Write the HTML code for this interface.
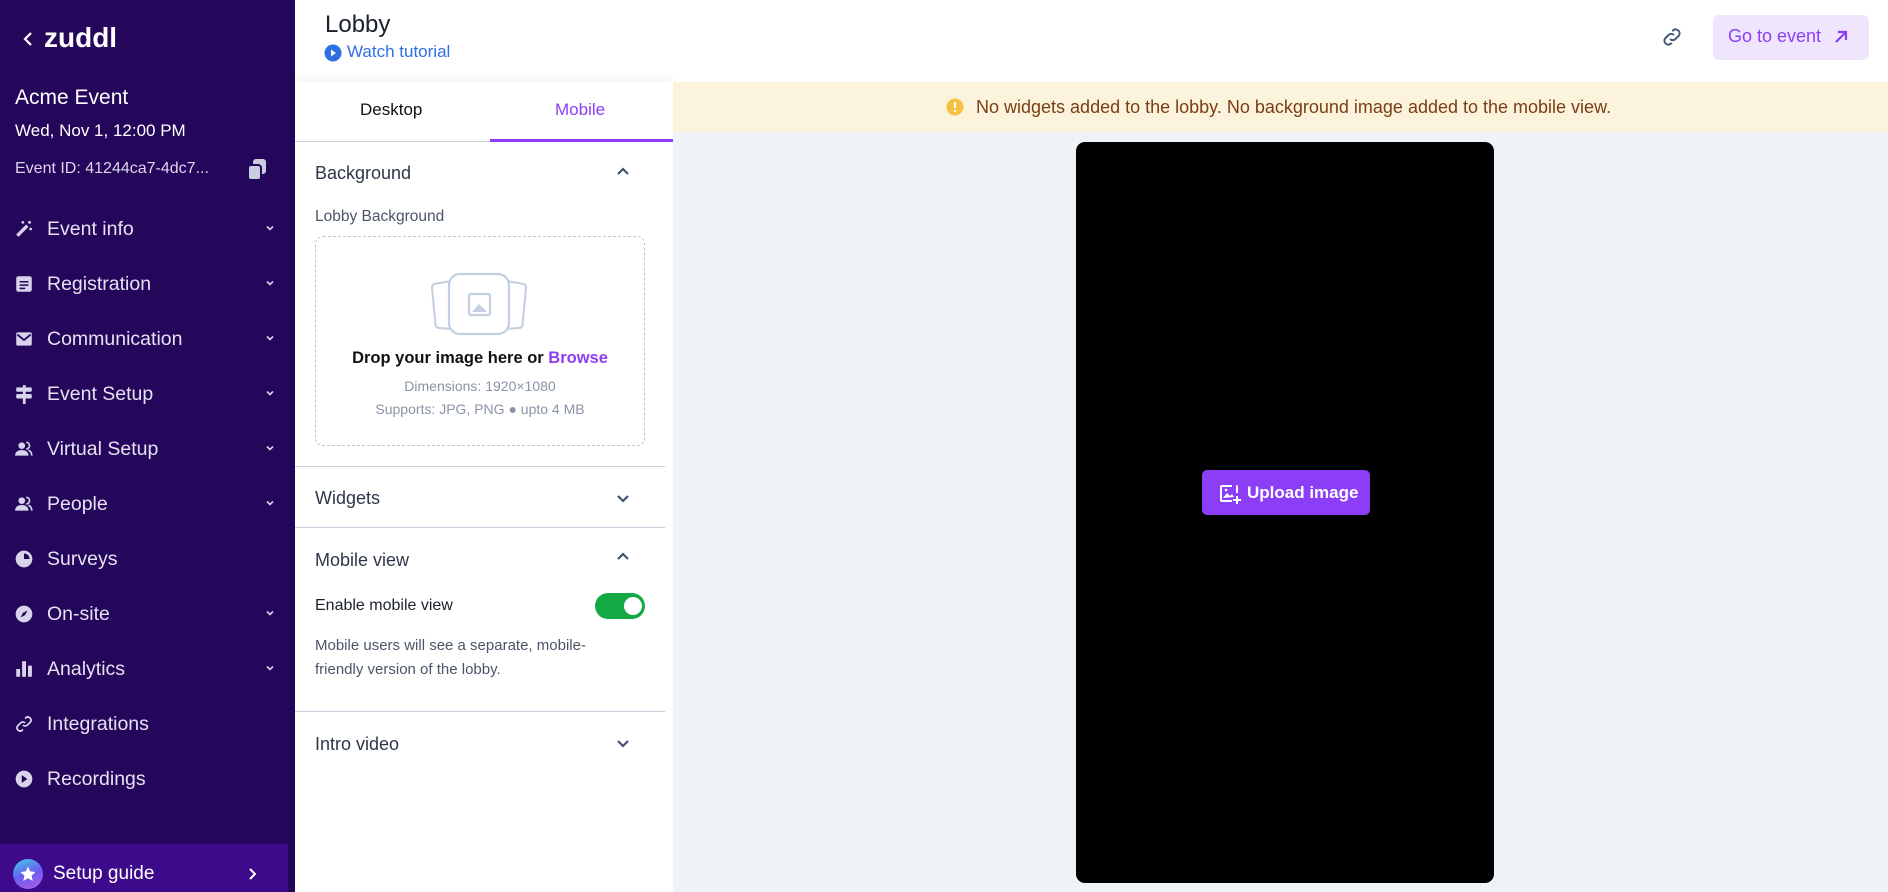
<!DOCTYPE html>
<html><head><meta charset="utf-8"><style>
*{box-sizing:border-box;margin:0;padding:0}
body{width:1888px;height:892px;overflow:hidden;font-family:"Liberation Sans",sans-serif;background:#fff;position:relative}
.abs{position:absolute}
#sb{left:0;top:0;width:295px;height:892px;background:#24065a;color:#fff}
.nav{position:absolute;left:0;width:295px;height:30px;color:#e6e2f3;font-size:19.5px}
.nav .ic{position:absolute;left:14px;top:5px;width:20px;height:20px}
.nav .tx{position:absolute;left:47px;top:4px}
.nav .cv{position:absolute;left:264px;top:8px;width:12px;height:12px}
.sec{position:absolute;left:315px;font-size:18px;color:#2d3748}
.chev{position:absolute;left:614px;width:18px;height:18px}
.hr{position:absolute;left:295px;width:378px;height:1px;background:#c5d0de}
</style></head><body>
<div id="sb" class="abs">
  <svg class="abs" style="left:22px;top:31px" width="14" height="16" viewBox="0 0 14 16"><path d="M9 2 L3 8 L9 14" stroke="#fff" stroke-width="2.2" fill="none"/></svg>
  <div class="abs" style="left:44px;top:22px;font-size:28px;font-weight:bold">zuddl</div>
  <div class="abs" style="left:15px;top:86px;font-size:21px">Acme Event</div>
  <div class="abs" style="left:15px;top:121px;font-size:17px">Wed, Nov 1, 12:00 PM</div>
  <div class="abs" style="left:15px;top:160px;font-size:16px;color:#ddd8ee">Event ID: 41244ca7-4dc7...</div>
  <svg class="abs" style="left:246px;top:158px" width="22" height="24" viewBox="0 0 22 24"><rect x="7" y="1" width="13" height="15" rx="3" fill="#c8cde0"/><rect x="2" y="7" width="13" height="15" rx="3" fill="#c8cde0" stroke="#24065a" stroke-width="2"/></svg>

  <div class="nav" style="top:214px"><svg class="ic" viewBox="0 0 18 18"><path d="M3 15 L12 6" stroke="#d8d4ec" stroke-width="3"/><circle cx="14" cy="3" r="1.3" fill="#d8d4ec"/><circle cx="15" cy="9" r="1.2" fill="#d8d4ec"/><circle cx="8" cy="3" r="1.2" fill="#d8d4ec"/></svg><span class="tx">Event info</span><svg class="cv" viewBox="0 0 12 12"><path d="M3 4.5 L6 7.5 L9 4.5" stroke="#d8d4ec" stroke-width="1.6" fill="none"/></svg></div>
  <div class="nav" style="top:269px"><svg class="ic" viewBox="0 0 18 18"><rect x="2" y="2" width="14" height="14" rx="2" fill="#d8d4ec"/><path d="M5 7h8M5 10h8M5 13h5" stroke="#24065a" stroke-width="1.4"/></svg><span class="tx">Registration</span><svg class="cv" viewBox="0 0 12 12"><path d="M3 4.5 L6 7.5 L9 4.5" stroke="#d8d4ec" stroke-width="1.6" fill="none"/></svg></div>
  <div class="nav" style="top:324px"><svg class="ic" viewBox="0 0 18 18"><rect x="2" y="3" width="14" height="12" rx="1.5" fill="#d8d4ec"/><path d="M3 5 L9 10 L15 5" stroke="#24065a" stroke-width="1.6" fill="none"/></svg><span class="tx">Communication</span><svg class="cv" viewBox="0 0 12 12"><path d="M3 4.5 L6 7.5 L9 4.5" stroke="#d8d4ec" stroke-width="1.6" fill="none"/></svg></div>
  <div class="nav" style="top:379px"><svg class="ic" viewBox="0 0 18 18"><rect x="2" y="3" width="14" height="4" rx="1" fill="#d8d4ec"/><rect x="2" y="9" width="14" height="4" rx="1" fill="#d8d4ec"/><rect x="8" y="1" width="2.5" height="17" fill="#d8d4ec"/></svg><span class="tx">Event Setup</span><svg class="cv" viewBox="0 0 12 12"><path d="M3 4.5 L6 7.5 L9 4.5" stroke="#d8d4ec" stroke-width="1.6" fill="none"/></svg></div>
  <div class="nav" style="top:434px"><svg class="ic" viewBox="0 0 18 18"><circle cx="7" cy="6" r="3" fill="#d8d4ec"/><path d="M1 15c0-4 3-5 6-5s6 1 6 5z" fill="#d8d4ec"/><path d="M11 3a3 3 0 010 6M13 10c2 1 3 3 3 5" stroke="#d8d4ec" stroke-width="1.5" fill="none"/></svg><span class="tx">Virtual Setup</span><svg class="cv" viewBox="0 0 12 12"><path d="M3 4.5 L6 7.5 L9 4.5" stroke="#d8d4ec" stroke-width="1.6" fill="none"/></svg></div>
  <div class="nav" style="top:489px"><svg class="ic" viewBox="0 0 18 18"><circle cx="7" cy="6" r="3" fill="#d8d4ec"/><path d="M1 15c0-4 3-5 6-5s6 1 6 5z" fill="#d8d4ec"/><path d="M11 3a3 3 0 010 6M13 10c2 1 3 3 3 5" stroke="#d8d4ec" stroke-width="1.5" fill="none"/></svg><span class="tx">People</span><svg class="cv" viewBox="0 0 12 12"><path d="M3 4.5 L6 7.5 L9 4.5" stroke="#d8d4ec" stroke-width="1.6" fill="none"/></svg></div>
  <div class="nav" style="top:544px"><svg class="ic" viewBox="0 0 18 18"><circle cx="9" cy="9" r="7.5" fill="#d8d4ec"/><path d="M9 9V4a5 5 0 015 5z" fill="#24065a"/></svg><span class="tx">Surveys</span></div>
  <div class="nav" style="top:599px"><svg class="ic" viewBox="0 0 18 18"><circle cx="9" cy="9" r="7.5" fill="#d8d4ec"/><path d="M12 6 L10 10 L6 12 L8 8z" fill="#24065a"/></svg><span class="tx">On-site</span><svg class="cv" viewBox="0 0 12 12"><path d="M3 4.5 L6 7.5 L9 4.5" stroke="#d8d4ec" stroke-width="1.6" fill="none"/></svg></div>
  <div class="nav" style="top:654px"><svg class="ic" viewBox="0 0 18 18"><rect x="2" y="9" width="3.5" height="7" fill="#d8d4ec"/><rect x="7.3" y="2" width="3.5" height="14" fill="#d8d4ec"/><rect x="12.6" y="6" width="3.5" height="10" fill="#d8d4ec"/></svg><span class="tx">Analytics</span><svg class="cv" viewBox="0 0 12 12"><path d="M3 4.5 L6 7.5 L9 4.5" stroke="#d8d4ec" stroke-width="1.6" fill="none"/></svg></div>
  <div class="nav" style="top:709px"><svg class="ic" viewBox="0 0 18 18"><path d="M8 10a3 3 0 004 0l3-3a3 3 0 00-4-4l-1 1M10 8a3 3 0 00-4 0l-3 3a3 3 0 004 4l1-1" stroke="#d8d4ec" stroke-width="1.6" fill="none"/></svg><span class="tx">Integrations</span></div>
  <div class="nav" style="top:764px"><svg class="ic" viewBox="0 0 18 18"><circle cx="9" cy="9" r="7.5" fill="#d8d4ec"/><path d="M7 5.5 L12 9 L7 12.5z" fill="#24065a"/></svg><span class="tx">Recordings</span></div>

  <div class="abs" style="left:0;top:844px;width:288px;height:48px;background:#3d0a8c">
    <div class="abs" style="left:13px;top:15px;width:30px;height:30px;border-radius:50%;background:linear-gradient(160deg,#3fd0e0,#6a5cf5 50%,#b45ce0)"></div>
    <svg class="abs" style="left:19px;top:21px" width="18" height="18" viewBox="0 0 24 24"><path d="M12 2l3 6.5 7 .8-5.2 4.8 1.5 7L12 17.6 5.7 21.1l1.5-7L2 9.3l7-.8z" fill="#fff"/></svg>
    <div class="abs" style="left:53px;top:19px;font-size:19px;color:#fff">Setup guide</div>
    <svg class="abs" style="left:246px;top:23px" width="12" height="14" viewBox="0 0 12 14"><path d="M4 2 L9 7 L4 12" stroke="#fff" stroke-width="2" fill="none"/></svg>
  </div>
</div>

<div class="abs" style="left:325px;top:11px;font-size:24px;color:#1a202c">Lobby</div>
<svg class="abs" style="left:324px;top:44px" width="18" height="18" viewBox="0 0 18 18"><circle cx="9" cy="9" r="8.5" fill="#2f6fe4"/><path d="M7 5.5 L12 9 L7 12.5z" fill="#fff"/></svg>
<div class="abs" style="left:347px;top:42px;font-size:17px;color:#2f6fe4">Watch tutorial</div>
<svg class="abs" style="left:1660px;top:25px" width="24" height="24" viewBox="0 0 24 24"><path d="M10 14a4 4 0 005.5 0l3.5-3.5a4 4 0 00-5.5-5.5l-1.2 1.2M14 10a4 4 0 00-5.5 0L5 13.5a4 4 0 005.5 5.5l1.2-1.2" stroke="#4a5a78" stroke-width="2" fill="none"/></svg>
<div class="abs" style="left:1713px;top:15px;width:156px;height:45px;background:#efe5fd;border-radius:6px"></div>
<div class="abs" style="left:1728px;top:26px;font-size:18px;color:#8b3ef5">Go to event</div>
<svg class="abs" style="left:1832px;top:28px" width="18" height="18" viewBox="0 0 18 18"><path d="M4 14 L14 4 M6 4 H14 V12" stroke="#8b3ef5" stroke-width="2.2" fill="none"/></svg>

<div class="abs" style="left:295px;top:82px;width:378px;height:810px;background:#fff;box-shadow:0 -4px 8px rgba(0,0,0,0.05)"></div>
<div class="abs" style="left:360px;top:100px;font-size:17px;color:#111">Desktop</div>
<div class="abs" style="left:555px;top:100px;font-size:17px;color:#8b3ef5">Mobile</div>
<div class="hr" style="top:141px;height:1px"></div>
<div class="abs" style="left:490px;top:139px;width:183px;height:3px;background:#8b3ef5"></div>

<div class="sec" style="top:163px">Background</div>
<svg class="chev" style="top:163px" viewBox="0 0 18 18"><path d="M4 11 L9 6 L14 11" stroke="#3f5470" stroke-width="2.2" fill="none"/></svg>
<div class="abs" style="left:315px;top:208px;font-size:15.5px;color:#4a5568">Lobby Background</div>
<div class="abs" style="left:315px;top:236px;width:330px;height:210px;border:1px dashed #b8c6da;border-radius:8px"></div>
<svg class="abs" style="left:429px;top:272px" width="100" height="66" viewBox="0 0 100 66">
  <path d="M5 12 L22 9 L24 57 L10 56 Q7 56 6.5 53 L3 16 Q3 13 5 12z" fill="#fff" stroke="#c2cfe0" stroke-width="2"/>
  <path d="M95 12 L78 9 L76 57 L90 56 Q93 56 93.5 53 L97 16 Q97 13 95 12z" fill="#fff" stroke="#c2cfe0" stroke-width="2"/>
  <rect x="20" y="2" width="60" height="60" rx="11" fill="#fff" stroke="#c2cfe0" stroke-width="2.2"/>
  <rect x="40" y="22" width="21" height="21" rx="2" fill="none" stroke="#c2cfe0" stroke-width="2.2"/>
  <path d="M43 40 L50 32 L58 40z" fill="#c2cfe0"/>
</svg>
<div class="abs" style="left:315px;top:349px;width:330px;text-align:center;font-size:16.5px;font-weight:bold;color:#111">Drop your image here or <span style="color:#8b3ef5">Browse</span></div>
<div class="abs" style="left:315px;top:378px;width:330px;text-align:center;font-size:14px;color:#8a94a6">Dimensions: 1920×1080</div>
<div class="abs" style="left:315px;top:401px;width:330px;text-align:center;font-size:14px;color:#8a94a6">Supports: JPG, PNG ● upto 4 MB</div>

<div class="hr" style="top:466px;width:370px"></div>
<div class="sec" style="top:488px">Widgets</div>
<svg class="chev" style="top:489px" viewBox="0 0 18 18"><path d="M4 7 L9 12 L14 7" stroke="#3f5470" stroke-width="2.2" fill="none"/></svg>
<div class="hr" style="top:527px;width:370px"></div>
<div class="sec" style="top:550px">Mobile view</div>
<svg class="chev" style="top:548px" viewBox="0 0 18 18"><path d="M4 11 L9 6 L14 11" stroke="#3f5470" stroke-width="2.2" fill="none"/></svg>
<div class="abs" style="left:315px;top:597px;font-size:16px;color:#1a202c">Enable mobile view</div>
<div class="abs" style="left:595px;top:593px;width:50px;height:26px;border-radius:13px;background:#13a943"></div>
<div class="abs" style="left:624px;top:597px;width:18px;height:18px;border-radius:50%;background:#fff"></div>
<div class="abs" style="left:315px;top:634px;width:300px;font-size:15px;line-height:24px;color:#4a5568">Mobile users will see a separate, mobile-friendly version of the lobby.</div>
<div class="hr" style="top:711px;width:370px"></div>
<div class="sec" style="top:734px">Intro video</div>
<svg class="chev" style="top:734px" viewBox="0 0 18 18"><path d="M4 7 L9 12 L14 7" stroke="#3f5470" stroke-width="2.2" fill="none"/></svg>

<div class="abs" style="left:673px;top:132px;width:1215px;height:760px;background:#eff2f7"></div>
<div class="abs" style="left:673px;top:82px;width:1215px;height:50px;background:#fcf3dc"></div>
<svg class="abs" style="left:946px;top:98px" width="18" height="18" viewBox="0 0 18 18"><circle cx="9" cy="9" r="8.5" fill="#f6c143"/><rect x="8" y="4" width="2" height="6" fill="#fff"/><rect x="8" y="12" width="2" height="2" fill="#fff"/></svg>
<div class="abs" style="left:976px;top:97px;font-size:18px;color:#7a3e12">No widgets added to the lobby. No background image added to the mobile view.</div>
<div class="abs" style="left:1076px;top:142px;width:418px;height:741px;background:#000;border-radius:9px"></div>
<div class="abs" style="left:1202px;top:470px;width:168px;height:45px;background:#8b3ef5;border-radius:5px"></div>
<svg class="abs" style="left:1218px;top:482px" width="24" height="24" viewBox="0 0 24 24"><path d="M14 4H4a1 1 0 00-1 1v13a1 1 0 001 1h10M19 11V5a1 1 0 00-1-1" stroke="#fff" stroke-width="2" fill="none"/><path d="M5 16 L9 11 L12 14 L14 12 L16 15z" fill="#fff"/><circle cx="8" cy="8" r="1.3" fill="#fff"/><path d="M19 14v8M15 18h8" stroke="#fff" stroke-width="2"/></svg>
<div class="abs" style="left:1247px;top:483px;font-size:17px;font-weight:bold;color:#fff">Upload image</div>
</body></html>
